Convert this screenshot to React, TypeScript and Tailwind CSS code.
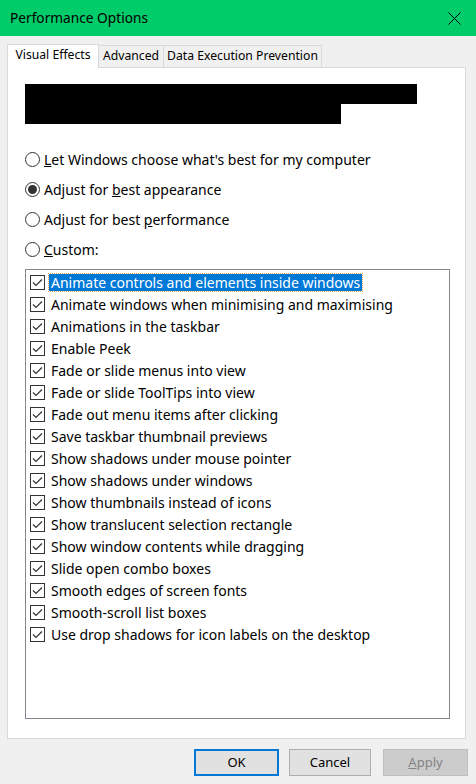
import React from "react";

const effects = [
  "Animate controls and elements inside windows",
  "Animate windows when minimising and maximising",
  "Animations in the taskbar",
  "Enable Peek",
  "Fade or slide menus into view",
  "Fade or slide ToolTips into view",
  "Fade out menu items after clicking",
  "Save taskbar thumbnail previews",
  "Show shadows under mouse pointer",
  "Show shadows under windows",
  "Show thumbnails instead of icons",
  "Show translucent selection rectangle",
  "Show window contents while dragging",
  "Slide open combo boxes",
  "Smooth edges of screen fonts",
  "Smooth-scroll list boxes",
  "Use drop shadows for icon labels on the desktop",
];

const Radio = ({ checked, children }: { checked?: boolean; children: React.ReactNode }) => (
  <div className="flex items-center h-[30px]">
    <span className="w-[15px] h-[15px] rounded-full border border-[#333333] bg-white flex items-center justify-center">
      {checked && <span className="w-[9px] h-[9px] rounded-full bg-[#333333]" />}
    </span>
    <span className="ml-[4px]">{children}</span>
  </div>
);

const CheckBox = () => (
  <span className="w-[15px] h-[15px] border border-[#333333] bg-white flex items-center justify-center shrink-0">
    <svg width="11" height="9" viewBox="0 0 11 9">
      <path d="M1 4.5 L4 7.5 L10 1.5" fill="none" stroke="#333333" strokeWidth="1.2" />
    </svg>
  </span>
);

export default function App() {
  return (
    <div
      className="w-[476px] h-[784px] bg-[#f0f0f0] flex flex-col text-[14px] text-black whitespace-nowrap"
      style={{ fontFamily: '"Noto Sans", "Liberation Sans", sans-serif' }}
    >
      {/* title bar */}
      <div className="h-[36px] shrink-0 bg-[#00cc6a] flex items-center justify-between pl-[10px] pr-[15px]">
        <span className="text-[13.7px]">Performance Options</span>
        <svg width="13" height="13" viewBox="0 0 13 13">
          <path d="M0.5 0.5 L12.5 12.5 M12.5 0.5 L0.5 12.5" stroke="#000" strokeWidth="1" />
        </svg>
      </div>

      {/* tabs */}
      <div className="flex items-end pl-[7px] h-[31px] shrink-0 text-[12.2px]">
        <div className="w-[92px] h-[24px] bg-white border border-b-0 border-[#d9d9d9] flex justify-center pt-[1px] relative z-10 -mb-px">
          Visual Effects
        </div>
        <div className="w-[65px] h-[22px] border border-l-0 border-b-0 border-[#d9d9d9] flex items-center justify-center">
          Advanced
        </div>
        <div className="w-[158px] h-[22px] border border-l-0 border-b-0 border-[#d9d9d9] flex items-center justify-center">
          Data Execution Prevention
        </div>
      </div>

      {/* tab page */}
      <div className="ml-[7px] mr-[10px] h-[672px] shrink-0 bg-white border border-[#d9d9d9] flex flex-col pl-[17px] pr-[15px]">
        <div className="mt-[16px] flex flex-col">
          <div className="h-[20px] w-[392px] bg-black" />
          <div className="h-[20px] w-[316px] bg-black" />
        </div>

        <div className="mt-[20px] flex flex-col">
          <Radio>
            <span className="underline">L</span>et Windows choose what's best for my computer
          </Radio>
          <Radio checked>
            Adjust for <span className="underline">b</span>est appearance
          </Radio>
          <Radio>
            Adjust for best <span className="underline">p</span>erformance
          </Radio>
          <Radio>
            <span className="underline">C</span>ustom:
          </Radio>
        </div>

        <div className="mt-[5px] h-[450px] border border-[#828790] pt-[1px] pl-[4px]">
          {effects.map((label, idx) => (
            <div key={label} className="h-[22px] flex items-center">
              <CheckBox />
              <span
                className={
                  idx === 0
                    ? "ml-[4px] h-[17px] px-[2px] flex items-center bg-[#0078d7] text-white outline outline-1 outline-dotted outline-[#f0a040]"
                    : "ml-[4px] px-[2px]"
                }
              >
                {label}
              </span>
            </div>
          ))}
        </div>
      </div>

      {/* buttons */}
      <div className="flex justify-end pr-[8px] mt-[10px] text-[13px]">
        <button className="w-[85px] h-[27px] bg-[#e1e1e1] border-2 border-[#0078d7]">OK</button>
        <button className="ml-[10px] w-[82px] h-[27px] bg-[#e1e1e1] border border-[#adadad]">Cancel</button>
        <button className="ml-[12px] w-[85px] h-[27px] bg-[#cccccc] border border-[#bfbfbf] text-[#838383]">
          <span className="underline">A</span>pply
        </button>
      </div>
    </div>
  );
}
